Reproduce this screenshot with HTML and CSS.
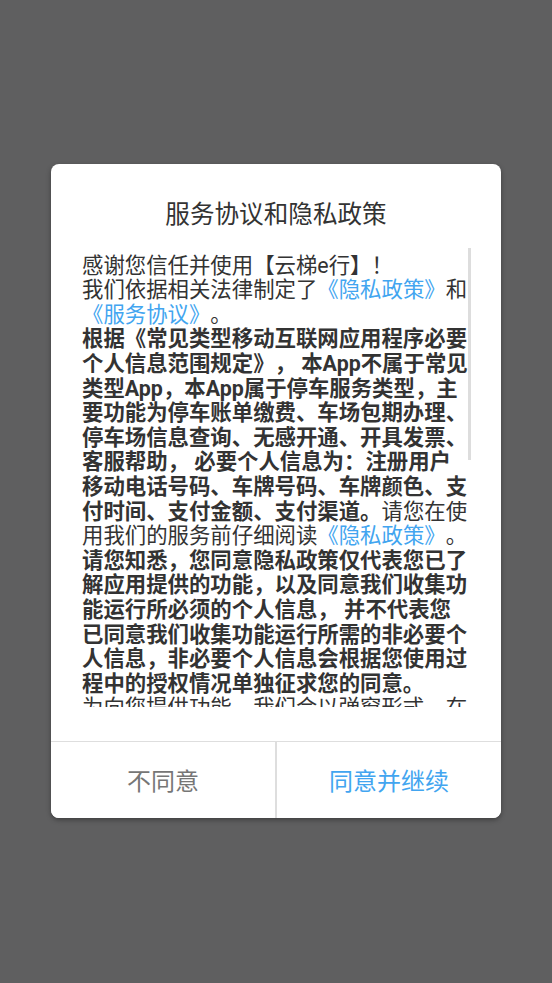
FILE: index.html
```html
<!DOCTYPE html>
<html lang="zh-CN">
<head>
<meta charset="utf-8">
<title>服务协议和隐私政策</title>
<link rel="stylesheet" href="styles.css">
</head>
<body>
<div class="dialog">
  <div class="title">服务协议和隐私政策</div>
  <div class="body">
    <div class="text">
      <p>感谢您信任并使用【云梯e行】！<br>我们依据相关法律制定了<a class="link">《隐私政策》</a>和<br><a class="link">《服务协议》</a>。<br><b>根据《常见类型移动互联网应用程序必要<br>个人信息范围规定》， 本App不属于常见<br>类型App，本App属于停车服务类型，主<br>要功能为停车账单缴费、车场包期办理、<br>停车场信息查询、无感开通、开具发票、<br>客服帮助， 必要个人信息为：注册用户<br>移动电话号码、车牌号码、车牌颜色、支<br>付时间、支付金额、支付渠道。</b>请您在使<br>用我们的服务前仔细阅读<a class="link">《隐私政策》</a>。<br><b>请您知悉，您同意隐私政策仅代表您已了<br>解应用提供的功能，以及同意我们收集功<br>能运行所必须的个人信息， 并不代表您<br>已同意我们收集功能运行所需的非必要个<br>人信息，非必要个人信息会根据您使用过<br>程中的授权情况单独征求您的同意。</b><br>为向您提供功能，我们会以弹窗形式，在</p>
    </div>
    <div class="scrollbar"><div class="thumb"></div></div>
  </div>
  <div class="actions">
    <button class="btn btn-cancel">不同意</button>
    <button class="btn btn-ok">同意并继续</button>
  </div>
</div>
</body>
</html>
```
FILE: styles.css
```css
html, body {
  margin: 0;
  padding: 0;
}
body {
  width: 552px;
  height: 983px;
  background: #5f5f60;
  font-family: Roboto, "Noto Sans CJK SC", sans-serif;
  color: #333333;
  overflow: hidden;
  text-spacing-trim: space-all;
}
.dialog {
  width: 450px;
  height: 654px;
  margin: 164px auto 0;
  background: #ffffff;
  border-radius: 8px;
  box-shadow: 0 2px 5px rgba(0, 0, 0, 0.35);
  display: flex;
  flex-direction: column;
  overflow: hidden;
}
.title {
  height: 84px;
  box-sizing: border-box;
  padding-top: 30px;
  line-height: 36px;
  font-size: 24.6px;
  text-align: center;
  color: #333333;
  font-family: "Noto Sans CJK SC", sans-serif;
}
.body {
  height: 459px;
  display: flex;
  padding: 0 30px 0 31px;
  margin-bottom: 34px;
}
.text {
  flex: 1;
  overflow: hidden;
  padding-top: 6px;
}
.text p {
  margin: 0;
  font-size: 21.4px;
  line-height: 24.6px;
  white-space: nowrap;
  color: #333333;
}
.text b {
  font-weight: 700;
}
.link {
  color: #42a5f0;
}
.scrollbar {
  width: 3px;
}
.thumb {
  height: 212px;
  background: #dddddd;
}
.actions {
  height: 77px;
  border-top: 1px solid #dedede;
  display: grid;
  grid-template-columns: 224px 1fr;
}
.btn {
  border: none;
  background: #ffffff;
  font-family: "Noto Sans CJK SC", sans-serif;
  font-size: 24px;
  padding: 0;
  margin: 0;
}
.btn-cancel {
  color: #767676;
}
.btn-ok {
  color: #42a5f0;
  border-left: 2px solid #dedede;
}
```
